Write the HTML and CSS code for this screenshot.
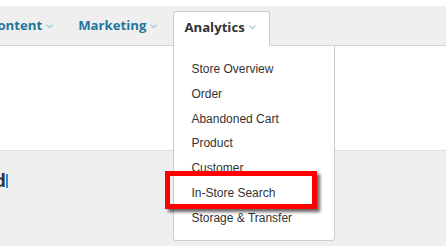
FILE: index.html
```html
<!DOCTYPE html>
<html lang="en">
<head>
    <meta charset="UTF-8">
    <title>Admin - Analytics menu</title>
    <link rel="stylesheet" href="styles.css">
</head>
<body>
    <div class="topbar"></div>

    <div class="nav">
        <div class="nav-item">
            <span>Content</span>
            <svg class="chevron" width="7" height="5" viewBox="0 0 7 5"><polyline points="0.5,0.5 3.5,3.5 6.5,0.5" /></svg>
        </div>
        <div class="nav-item">
            <span>Marketing</span>
            <svg class="chevron" width="7" height="5" viewBox="0 0 7 5"><polyline points="0.5,0.5 3.5,3.5 6.5,0.5" /></svg>
        </div>
        <div class="nav-item active">
            <span>Analytics</span>
            <svg class="chevron" width="7" height="5" viewBox="0 0 7 5"><polyline points="0.5,0.5 3.5,3.5 6.5,0.5" /></svg>

            <ul class="dropdown">
                <li>Store Overview</li>
                <li>Order</li>
                <li>Abandoned Cart</li>
                <li>Product</li>
                <li>Customer</li>
                <li>In-Store Search</li>
                <li>Storage &amp; Transfer</li>
                <div class="highlight"></div>
            </ul>
        </div>
    </div>

    <div class="header-space"></div>

    <div class="page">
        <h2 class="page-title">Dashboard<span class="caret"></span></h2>
    </div>
</body>
</html>
```

FILE: styles.css
```css
* {
    margin: 0;
    padding: 0;
    box-sizing: border-box;
}

body {
    background: #ffffff;
    font-family: 'Open Sans', sans-serif;
    overflow: hidden;
    height: 246px;
}

.topbar {
    height: 6px;
    background: #ffffff;
}

.nav {
    height: 40px;
    background: #efefef;
    border-bottom: 1px solid #d4d4d4;
    display: flex;
    align-items: flex-end;
    margin-left: -11px;
    gap: 25px;
    position: relative;
    z-index: 2;
}

.nav-item {
    display: flex;
    align-items: center;
    gap: 4px;
    height: 35px;
    padding: 0 0 5px 0;
    font-size: 13.2px;
    font-weight: 700;
    color: #22769c;
}

.chevron {
    fill: none;
    stroke: #a9d0e0;
    stroke-width: 1.3;
    margin-top: 2px;
}

.nav-item.active {
    position: relative;
    color: #333333;
    background: #ffffff;
    border: 1px solid #cccccc;
    border-bottom: none;
    border-radius: 3px 3px 0 0;
    height: 35px;
    margin-left: -9px;
    margin-bottom: -1px;
    padding: 0 13px 5px 10px;
}

.dropdown {
    position: absolute;
    top: 34px;
    left: -1px;
    width: 162px;
    list-style: none;
    background: #ffffff;
    border: 1px solid #cccccc;
    border-top: none;
    border-radius: 0 0 3px 3px;
    padding: 11px 0 9px 0;
    font-family: 'Liberation Sans', Arial, sans-serif;
    font-weight: 400;
    font-size: 12px;
    color: #333333;
}

.dropdown li {
    line-height: 24.8px;
    padding-left: 17px;
}

.highlight {
    position: absolute;
    left: -9px;
    top: 125px;
    width: 152px;
    height: 38px;
    border: 5px solid #ff0000;
    box-shadow: 3px 3px 3px rgba(0, 0, 0, 0.6);
}

.header-space {
    height: 104px;
    background: #ffffff;
}

.page {
    background: #efefef;
    border-top: 1px solid #dddddd;
    height: 96px;
    padding-top: 17px;
}

.page-title {
    font-size: 18px;
    font-weight: 700;
    color: #333333;
    margin-left: -92px;
    line-height: 24px;
}

.caret {
    display: inline-block;
    width: 2px;
    height: 14px;
    background: #2a8ad4;
    vertical-align: -1px;
}
```
